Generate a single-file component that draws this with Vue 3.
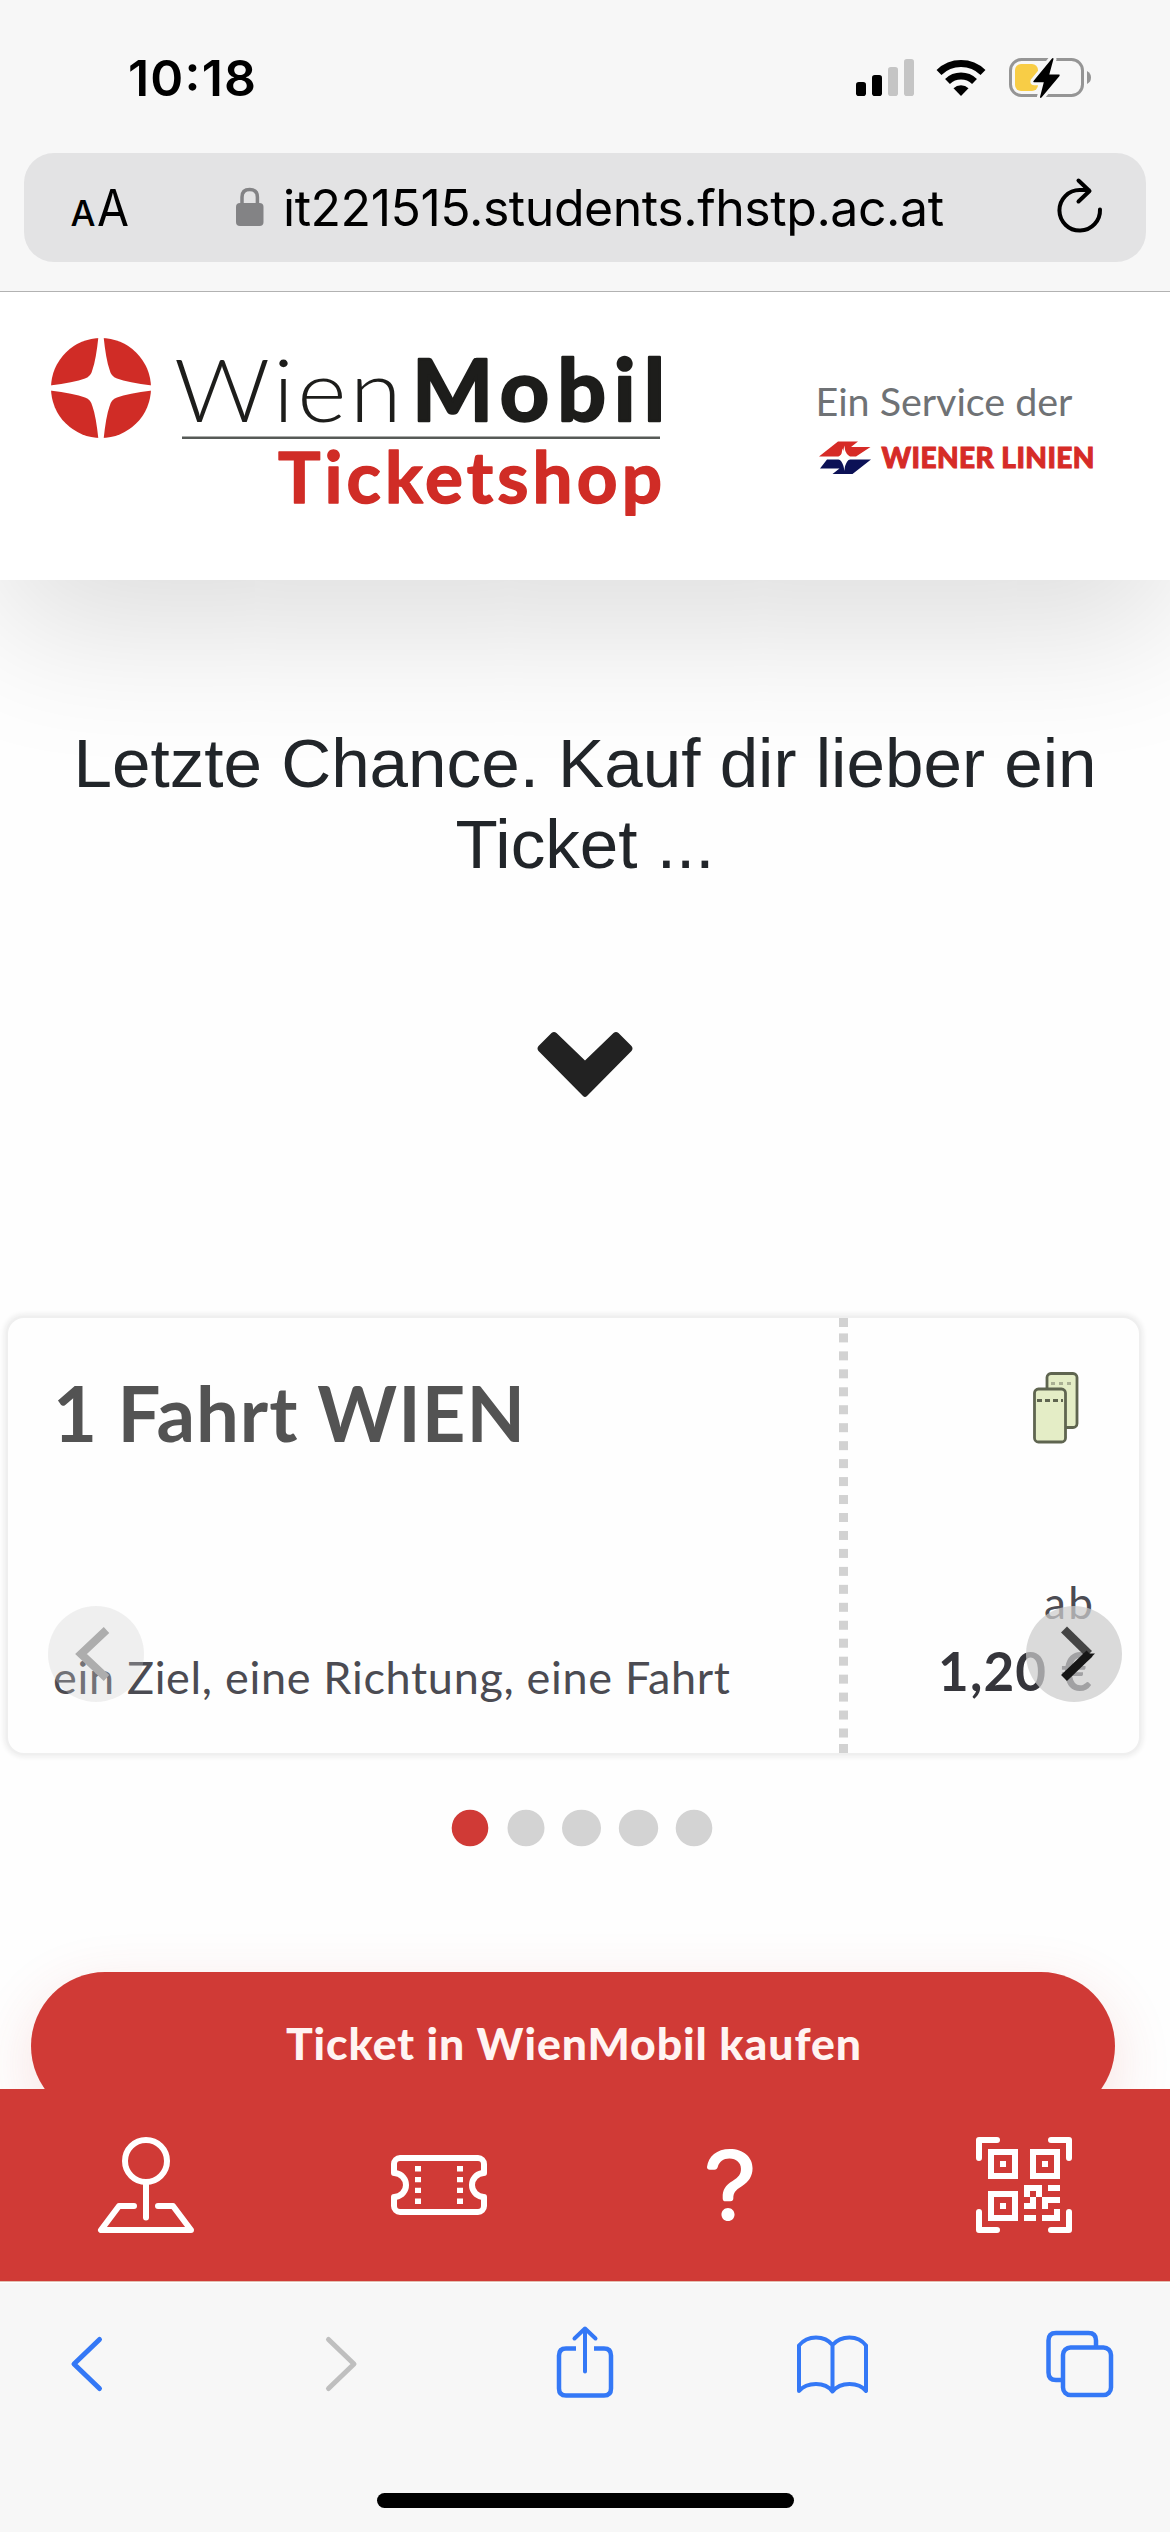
<script setup>
const bars = [
  { x: 0, y: 23, on: true },
  { x: 16, y: 16, on: true },
  { x: 32, y: 8, on: false },
  { x: 48, y: 0, on: false },
]
const perforation = [0, ...Array.from({ length: 23 }, (_, i) => 15.4 + i * 17.96), 426]
const dots = [
  { cx: 19, rx: 18.3, active: true },
  { cx: 75, rx: 18.5 },
  { cx: 130.5, rx: 19.5 },
  { cx: 187.5, rx: 19.7 },
  { cx: 243, rx: 18.3 },
]
</script>

<template>
  <div class="phone">
    <div class="chrome">
      <div class="status">
        <svg class="time" width="150" height="70" viewBox="0 -12 150 70">
          <text x="0" y="43" font-size="50" font-weight="600" textLength="128">10:18</text>
        </svg>
        <svg class="signals" width="232" height="44" viewBox="856 56 232 44">
          <rect v-for="b in bars" :key="b.x" :x="856 + b.x" :y="59 + b.y" width="10" :height="37 - b.y" rx="2.8" :fill="b.on ? '#000' : '#c5c5c5'" />
          <path d="M961 96l-7.5-7.8a11 11 0 0 1 15 0z" />
          <path d="M947.5 81.5a19.5 19.5 0 0 1 27 0M939 72.5a31.5 31.5 0 0 1 44 0" fill="none" stroke="#000" stroke-width="7" />
          <rect x="1010.5" y="59.5" width="72" height="36" rx="11" fill="none" stroke="#959595" stroke-width="3" />
          <path d="M1087 71v13q4-2 4-6.500t-4-6.500z" fill="#959595" />
          <rect x="1015" y="64" width="23" height="27" rx="6" fill="#f8cd46" />
          <path d="M1052 58.500L1033.500 81q-.8 1.200.6 1.200h9.700L1040 97q0 1.500 1.500.5L1059.500 76q.8-1.400-.6-1.400h-9.600L1053.500 59q0-1.500-1.500-.5z" stroke="#f7f7f7" stroke-width="6" paint-order="stroke" />
        </svg>
      </div>
      <div class="address">
        <svg class="url" width="1122" height="109" viewBox="24 153 1122 109">
          <text x="70.500" y="226" font-size="36" font-weight="500" textLength="25" lengthAdjust="spacingAndGlyphs">A</text>
          <text x="97" y="226" font-size="51" textLength="32" lengthAdjust="spacingAndGlyphs">A</text>
          <path d="M242 205v-8q0-7.500 7.700-7.500t7.700 7.500v8" fill="none" stroke="#838385" stroke-width="3.500" />
          <rect x="236" y="203" width="27.500" height="23" rx="4" fill="#838385" />
          <text x="283" y="226" font-size="50" textLength="661">it221515.students.fhstp.ac.at</text>
          <path d="M1100 209.500a20.300 20.300 0 1 1-20.300-19.500h9M1078.500 180.500l11 10.500-11 10.500" fill="none" stroke="#000" stroke-width="4" stroke-linecap="round" stroke-linejoin="round" />
        </svg>
      </div>
    </div>

    <header class="header">
      <svg class="brand" width="632" height="200" viewBox="48 336 632 200">
        <circle cx="101" cy="388" r="50" fill="#d02c26" />
        <path d="M98.500 336L103.500 336Q106 360 109.500 369.500Q111 376.500 117 378.500Q128 382.500 152 385.500V390.500Q128 393.500 117 397.500Q111 399.500 109.500 406.500Q106 416 103.500 440H98.500Q96 416 92.500 406.500Q91 399.500 85 397.500Q74 393.500 50 390.500V385.500Q74 382.500 85 378.500Q91 376.500 92.500 369.500Q96 360 98.500 336Z" fill="#fff" />
        <g font-family="Lato" fill="#1d1d1b">
          <text x="174" y="421.500" font-size="87" font-weight="300" letter-spacing="3" textLength="231" lengthAdjust="spacingAndGlyphs">Wien</text>
          <text x="412" y="421" font-size="86" font-weight="700" textLength="253" stroke="#1d1d1b" stroke-width="2.500" stroke-linejoin="round">Mobil</text>
        </g>
        <rect x="182" y="436.500" width="478" height="2.500" fill="#565a57" />
        <text x="278" y="502.500" font-family="Lato" font-size="71" font-weight="700" fill="#d02c26" textLength="384" stroke="#d02c26" stroke-width="1.500" stroke-linejoin="round">Ticketshop</text>
      </svg>
      <svg class="service" width="285" height="116" viewBox="815 368 285 116">
        <text x="815.500" y="416" font-family="Lato" font-size="39.500" fill="#6f7275" textLength="257">Ein Service der</text>
        <path d="M838 441.500h20l-7 5.500h19.500L856 456.500h-13.500l1-5.500-1-2.500-1.500 8H819z" fill="#d62b27" />
        <path d="M827 459.500h15l2-3 1.500 3h25.500L852.500 474H832.500l7-5.500H820z" fill="#0c1156" />
        <path d="M844.300 445.500Q845.300 457.300 854 457.900Q845.300 458.500 844.300 471Q843.300 458.500 834.500 457.900Q843.300 457.300 844.300 445.500Z" fill="#fff" />
        <text x="881.500" y="468" font-family="Lato" font-size="28" font-weight="900" fill="#d62b27" textLength="213" stroke="#d62b27" stroke-width="1">WIENER LINIEN</text>
      </svg>
    </header>

    <main class="main">
      <h1 class="headline">Letzte Chance. Kauf dir lieber ein Ticket ...</h1>
      <svg class="down" width="96" height="67" viewBox="0 0 96 67">
        <path d="M1.500 15L14.500 2Q17 0 19.500 2L48 29.500L76.500 2Q79 0 81.500 2L94.500 15Q96.500 17.500 94.500 20L50 65Q48 67 46 65L1.500 20Q-.5 17.500 1.500 15Z" fill="#222" />
      </svg>

      <section class="card">
        <div class="offer">
          <svg width="490" height="104" viewBox="0 -16 490 104">
            <text x="0" y="69" font-size="76" font-weight="700" fill="#535353" textLength="472">1 Fahrt WIEN</text>
          </svg>
          <svg width="700" height="60" viewBox="0 0 700 60">
            <text x="0" y="45" font-size="45" fill="#4b4b52" textLength="677">ein Ziel, eine Richtung, eine Fahrt</text>
          </svg>
        </div>
        <svg class="perforation" width="9" height="435" viewBox="0 0 9 435">
          <rect v-for="y in perforation" :key="y" x="0" :y="y" width="9" height="9" fill="#d2d2d2" />
        </svg>
        <div class="price">
          <svg width="47" height="73" viewBox="1032 1371 47 73">
            <g fill="#e4edc6" stroke="#5f6550" stroke-width="2.800">
              <rect x="1047" y="1373.500" width="30" height="54" rx="4" />
              <path d="M1051 1383.500h24" stroke="#a9af93" stroke-dasharray="4 4" />
              <rect x="1034.500" y="1389" width="31" height="53" rx="4" />
              <path d="M1037 1400.500h26" stroke-dasharray="5 3" />
            </g>
          </svg>
          <svg width="164" height="140" viewBox="-4 -20 164 140">
            <text x="110" y="37.500" font-size="44" fill="#4b4b52" textLength="49">ab</text>
            <text x="4" y="109.500" font-size="53" font-weight="700" fill="#35353b" textLength="154">1,20 €</text>
          </svg>
        </div>
        <div class="arrow prev">
          <svg width="96" height="96" viewBox="0 0 96 96"><path d="M58.500 24L33 48l25.500 24" fill="none" stroke="#adadad" stroke-width="8" /></svg>
        </div>
        <div class="arrow next">
          <svg width="96" height="96" viewBox="0 0 96 96" fill="none" stroke-width="8.500">
            <path d="M38 23.500L63 48" stroke="#444" />
            <path d="M38 72L63.500 47.500" stroke="#161616" />
            <path d="M57 47.500h12l-6 6z" fill="#161616" />
          </svg>
        </div>
      </section>

      <svg class="dots" width="262" height="38" viewBox="0 0 262 38">
        <ellipse v-for="d in dots" :key="d.cx" :cx="d.cx" cy="19" :rx="d.rx" ry="18.300" :fill="d.active ? '#d03a36' : '#d3d3d3'" />
      </svg>

      <div class="buy">
        <svg width="600" height="70" viewBox="0 -8 600 70">
          <text x="13" y="46" font-size="44.500" font-weight="900" fill="#fff4f2" textLength="575">Ticket in WienMobil kaufen</text>
        </svg>
      </div>
    </main>

    <nav class="tabs">
      <div class="tab">
        <svg width="96" height="96" viewBox="0 0 16 16" fill="none" stroke="#fff" stroke-linecap="round" stroke-linejoin="round">
          <circle cx="8" cy="4" r="3.500" />
          <path d="M8 7.500v5.900M6 11.500H3.500L.5 15.500h15l-3-4H10" />
        </svg>
      </div>
      <div class="tab">
        <svg width="96" height="96" viewBox="0 0 16 16" fill="#fff">
          <path d="M4 4.850v.9h1v-.9zm7 0v.9h1v-.9zm-7 1.800v.9h1v-.9zm7 0v.9h1v-.9zm-7 1.800v.9h1v-.9zm7 0v.9h1v-.9zm-7 1.800v.9h1v-.9zm7 0v.9h1v-.9z" />
          <path d="M1.500 3A1.500 1.500 0 0 0 0 4.500V6a.5.5 0 0 0 .5.5 1.500 1.500 0 1 1 0 3 .5.5 0 0 0-.5.5v1.500A1.500 1.500 0 0 0 1.500 13h13a1.500 1.500 0 0 0 1.500-1.500V10a.5.5 0 0 0-.5-.5 1.500 1.500 0 0 1 0-3A.5.5 0 0 0 16 6V4.500A1.500 1.500 0 0 0 14.500 3zM1 4.500a.5.5 0 0 1 .5-.5h13a.5.5 0 0 1 .5.5v1.050a2.500 2.500 0 0 0 0 4.900v1.050a.5.5 0 0 1-.5.5h-13a.5.5 0 0 1-.5-.5v-1.050a2.500 2.500 0 0 0 0-4.900z" />
        </svg>
      </div>
      <div class="tab">
        <svg width="96" height="96" viewBox="0 0 16 16" fill="#fff">
          <path d="M4.475 5.458c-.284 0-.514-.237-.47-.517C4.280 3.240 5.576 2 7.825 2c2.250 0 3.767 1.360 3.767 3.215 0 1.344-.665 2.288-1.790 2.973-1.100.659-1.414 1.118-1.414 2.010v.030a.5.5 0 0 1-.5.5h-.770a.5.5 0 0 1-.5-.495l-.003-.2c-.043-1.221.477-2.001 1.645-2.712 1.030-.632 1.397-1.135 1.397-2.028 0-.979-.758-1.698-1.926-1.698-1.009 0-1.710.529-1.938 1.402-.066.254-.278.461-.540.461h-.777ZM7.496 14c.622 0 1.095-.474 1.095-1.090 0-.618-.473-1.092-1.095-1.092-.606 0-1.087.474-1.087 1.091S6.890 14 7.496 14" />
        </svg>
      </div>
      <div class="tab">
        <svg width="96" height="96" viewBox="0 0 16 16" fill="#fff">
          <path d="M0 .5A.5.5 0 0 1 .5 0h3a.5.5 0 0 1 0 1H1v2.500a.5.5 0 0 1-1 0zm12 0a.5.5 0 0 1 .5-.5h3a.5.5 0 0 1 .5.5v3a.5.5 0 0 1-1 0V1h-2.500a.5.5 0 0 1-.5-.5M.5 12a.5.5 0 0 1 .5.5V15h2.500a.5.5 0 0 1 0 1h-3a.5.5 0 0 1-.5-.5v-3a.5.5 0 0 1 .5-.5m15 0a.5.5 0 0 1 .5.5v3a.5.5 0 0 1-.5.5h-3a.5.5 0 0 1 0-1H15v-2.500a.5.5 0 0 1 .5-.5M4 4h1v1H4z" />
          <path d="M7 2H2v5h5zM3 3h3v3H3zm2 8H4v1h1z" />
          <path d="M7 9H2v5h5zm-4 1h3v3H3zm8-6h1v1h-1z" />
          <path d="M9 2h5v5H9zm1 1v3h3V3zM8 8v2h1v1H8v1h2v-2h1v2h1v-1h2v-1h-3V8zm2 2H9V9h1zm4 2h-1v1h-2v1h3zm-4 2v-1H8v1z" />
          <path d="M12 9h2V8h-2z" />
        </svg>
      </div>
    </nav>

    <footer class="toolbar">
      <svg width="1044" height="76" viewBox="70 2324 1044 76" fill="none" stroke="#3478f6" stroke-width="4.500" stroke-linecap="round" stroke-linejoin="round">
        <path d="M99.500 2339.500L74 2364l25.500 24.500" stroke-width="5" />
        <path d="M328.500 2339.500L354 2364l-25.500 24.500" stroke="#bfbfbf" stroke-width="5" />
        <path d="M576 2348.500h-10q-7 0-7 7v33q0 7 7 7h38q7 0 7-7v-33q0-7-7-7h-10" stroke-linecap="butt" />
        <path d="M585 2371.500v-43M574.500 2338.500L585 2328.500l10.500 10" stroke-width="4" />
        <path d="M832.500 2345q-6-7.500-16.500-7.500t-17 8v45.500q6-7 17-7t16.500 7.500q6-7.500 17-7.500t16.500 7v-45.500q-6-8-16.500-8t-17 7.500zv46" stroke-width="4" />
        <path d="M1061 2380h-5q-7.500 0-7.500-7.500v-32q0-7.500 7.500-7.500h32.500q7.500 0 7.500 7.500v6" stroke-linecap="butt" />
        <rect x="1063" y="2347.500" width="48" height="47.500" rx="7.500" />
      </svg>
      <div class="home"></div>
    </footer>
  </div>
</template>

<style>
body {
  margin: 0;
}
</style>

<style scoped>
.phone {
  width: 1170px;
  height: 2532px;
  display: flex;
  flex-direction: column;
  overflow: hidden;
  background: #fefefe;
  font-family: "Liberation Sans", Arial, sans-serif;
}
svg {
  display: block;
  flex: none;
  overflow: visible;
}
.chrome {
  height: 291px;
  flex: none;
  background: #f7f7f7;
  border-bottom: 1px solid #b2b2b2;
  font-family: Inter, sans-serif;
  position: relative;
  z-index: 2;
}
.status {
  height: 153px;
  box-sizing: border-box;
  padding: 41px 82px 0 128px;
  display: flex;
  justify-content: space-between;
}
.signals {
  margin-top: 15px;
}
.address {
  width: 1122px;
  height: 109px;
  margin-left: 24px;
  border-radius: 30px;
  background: #e3e3e4;
}
.header {
  height: 288px;
  flex: none;
  box-sizing: border-box;
  padding: 44px 70px 0 48px;
  display: flex;
  justify-content: space-between;
  background: #fff;
  box-shadow: 0 48px 144px rgba(0, 0, 0, 0.135);
  position: relative;
  z-index: 1;
}
.service {
  margin-top: 32px;
}
.main {
  height: 1509px;
  flex: none;
  overflow: hidden;
  display: flex;
  flex-direction: column;
  align-items: center;
  position: relative;
}
.headline {
  margin: 143px 50px 0;
  font-size: 69.200px;
  line-height: 81px;
  font-weight: 400;
  text-align: center;
  color: #212529;
  position: relative;
  z-index: 2;
}
.down {
  margin-top: 146px;
}
.card {
  align-self: flex-start;
  margin: 218px 0 0 6px;
  width: 1131px;
  height: 435px;
  border: 2px solid #efefef;
  border-radius: 18px;
  box-shadow: 0 0 5px 2px #ededed;
  display: flex;
  position: relative;
  background: #fefefe;
  font-family: Lato, sans-serif;
}
.offer {
  width: 831px;
  display: flex;
  flex-direction: column;
  justify-content: space-between;
  padding: 39px 0 44px 45px;
  box-sizing: border-box;
}
.price {
  flex: 1;
  display: flex;
  flex-direction: column;
  justify-content: space-between;
  align-items: flex-end;
  padding: 53px 45px 52px 0;
}
.price > svg:first-child {
  margin-right: 15px;
}
.arrow {
  position: absolute;
  top: 288px;
  width: 96px;
  height: 96px;
  border-radius: 50%;
}
.prev {
  left: 40px;
  background: rgba(204, 204, 204, 0.3);
}
.next {
  right: 17px;
  background: rgba(204, 204, 204, 0.72);
}
.dots {
  margin: 54px 0 0 -6px;
}
.buy {
  width: 1084px;
  height: 148px;
  flex: none;
  margin: 125px 0 0 -24px;
  border-radius: 76px;
  background: #d03a36;
  box-shadow: 0 18px 60px rgba(208, 58, 54, 0.15);
  display: flex;
  justify-content: center;
  padding-top: 34px;
  box-sizing: border-box;
  font-family: Lato, sans-serif;
}
.tabs {
  height: 192px;
  flex: none;
  background: #d03a36;
  display: flex;
  position: relative;
  z-index: 1;
}
.tab {
  flex: 1;
  display: flex;
  justify-content: center;
  align-items: center;
}
.toolbar {
  height: 251px;
  box-sizing: border-box;
  border-top: 1px solid #e3bfb2;
  box-shadow: inset 0 1px #fff;
  background: #f7f7f7;
  padding-top: 42px;
  display: flex;
  flex-direction: column;
  align-items: center;
}
.toolbar > svg {
  margin-left: 14px;
}
.home {
  width: 417px;
  height: 15px;
  margin-top: 93px;
  border-radius: 8px;
  background: #000;
}
</style>
